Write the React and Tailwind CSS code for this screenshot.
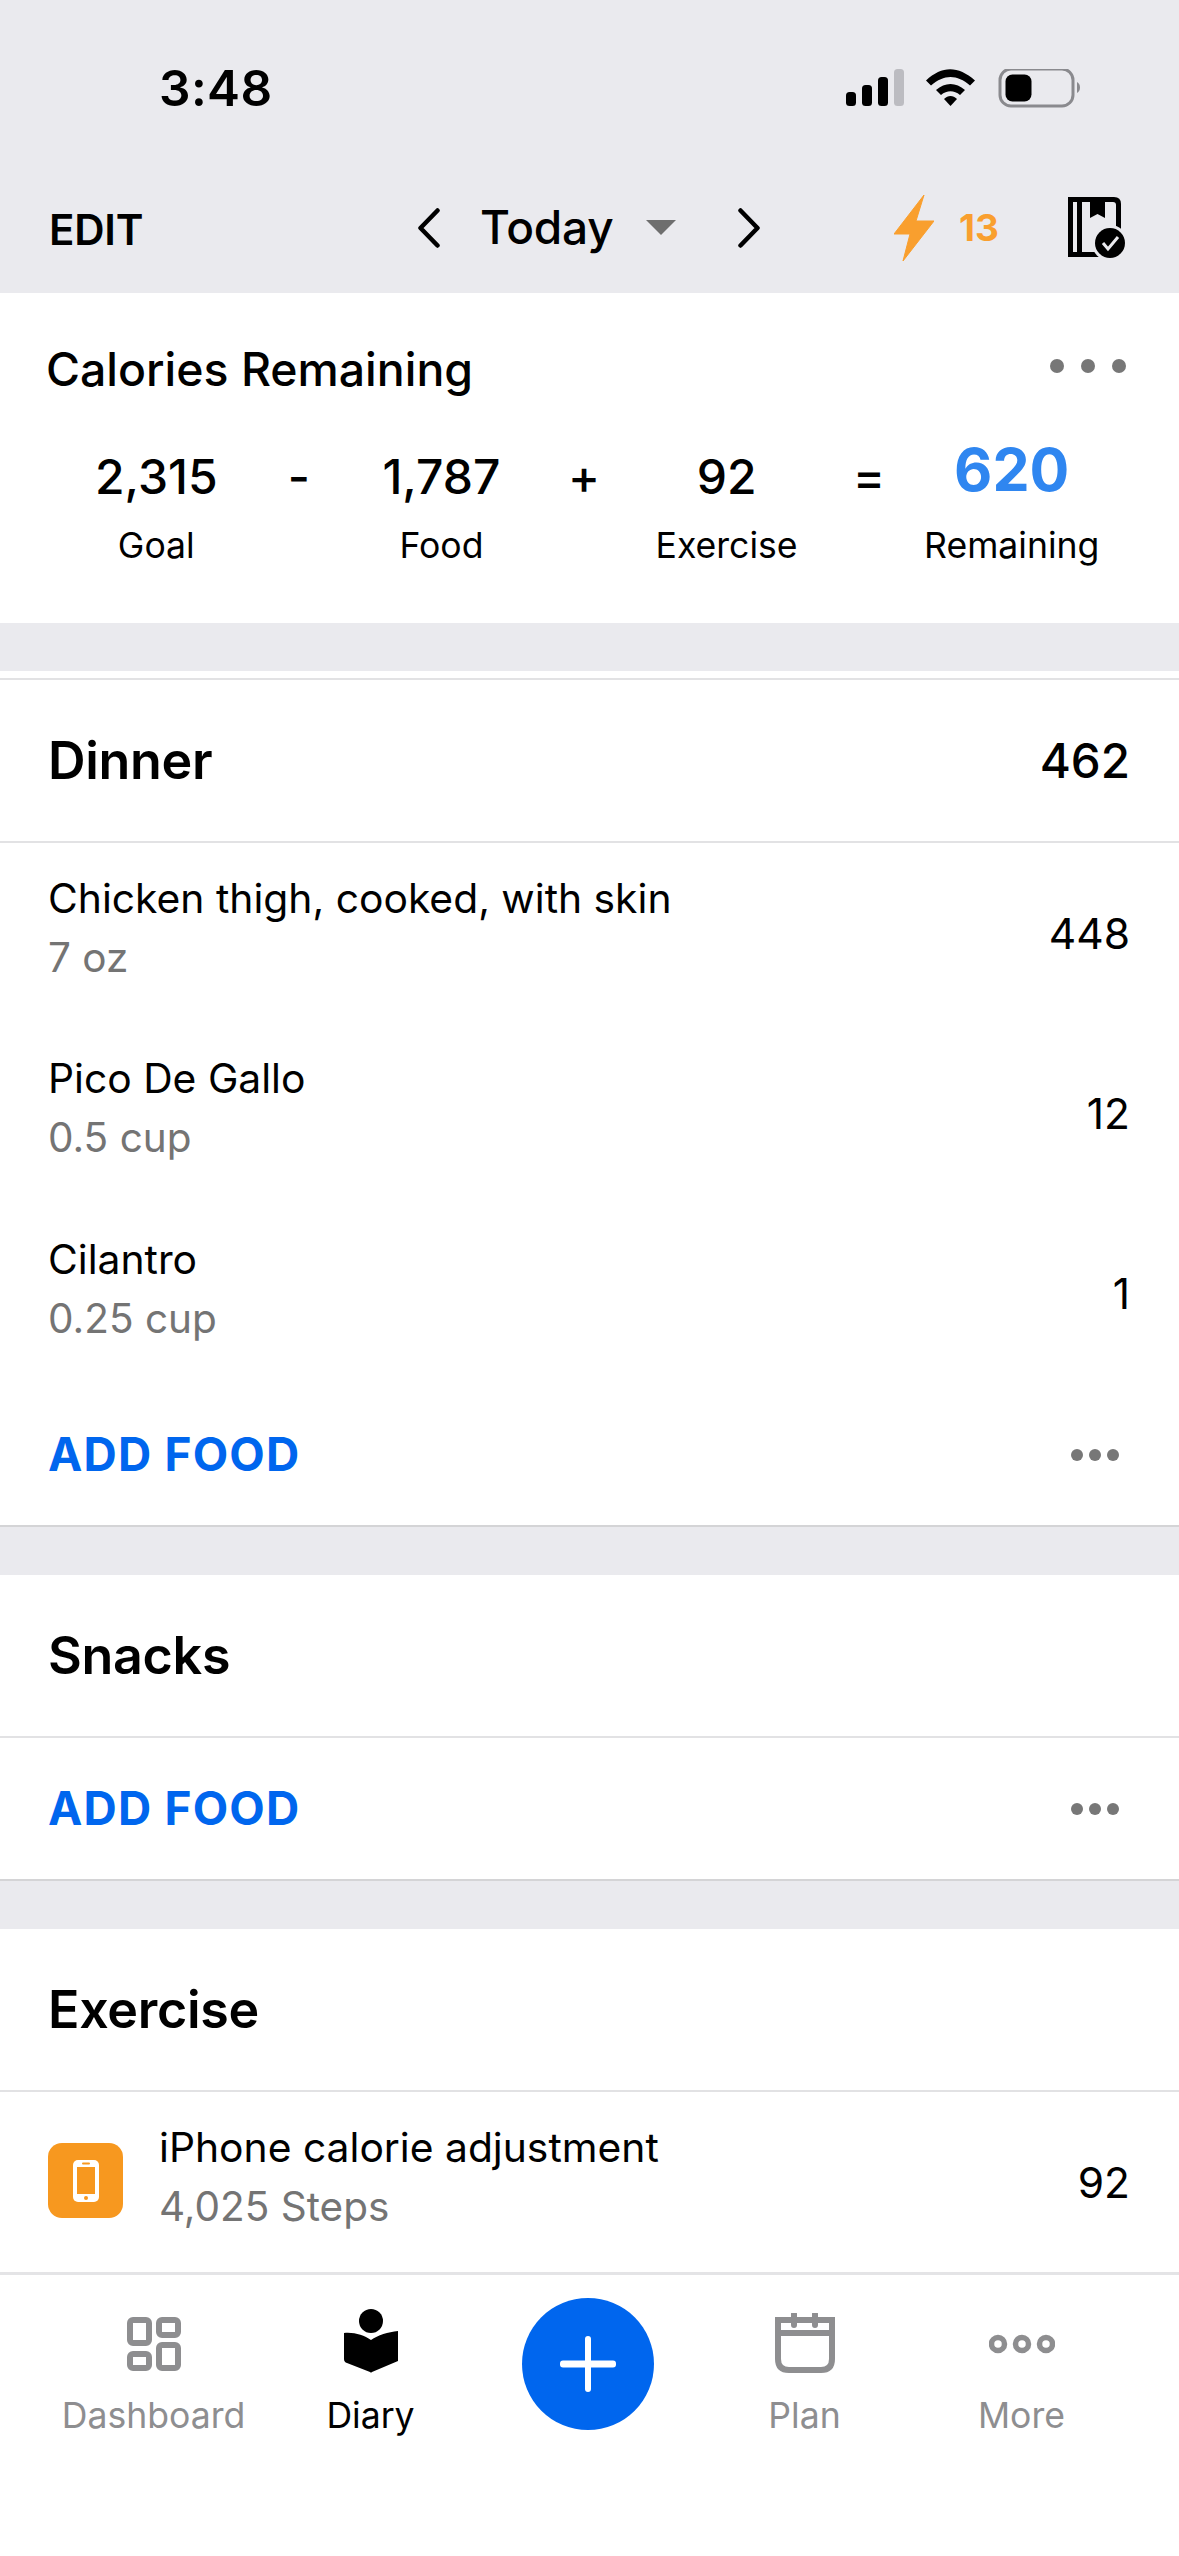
import React from "react";

const Dots = ({ r = 7, gap = 20, color = "#777" }) => (
  <div className="flex items-center" style={{ gap }}>
    {[0, 1, 2].map((i) => (
      <div key={i} className="rounded-full" style={{ width: r * 2, height: r * 2, background: color }} />
    ))}
  </div>
);

const SectionHead = ({ title, value }) => (
  <div className="h-[163px] flex items-center justify-between pl-[48px] pr-[49px] pt-[1px] border-b-2 border-[#e2e2e4] bg-white shrink-0">
    <span className="text-[52px] font-semibold tracking-[-0.3px] text-black">{title}</span>
    {value && <span className="text-[47.5px] font-medium text-black">{value}</span>}
  </div>
);

const FoodRow = ({ title, sub, value, icon, h = 180 }) => (
  <div className="flex items-center justify-between pl-[48px] pr-[49px] bg-white shrink-0" style={{ height: h }}>
    <div className="flex items-center">
      {icon}
      <div className="flex flex-col pb-[10px]">
        <span className="text-[40.8px] leading-[60px] text-black">{title}</span>
        <span className="text-[40.5px] leading-[60px] text-[#747474]">{sub}</span>
      </div>
    </div>
    <span className="text-[42.5px] pt-[1px] text-black">{value}</span>
  </div>
);

const AddFood = () => (
  <div className="h-[143px] flex items-center justify-between pl-[48px] pr-[60px] bg-white border-b-2 border-[#d4d4d6] shrink-0">
    <span className="text-[46px] font-bold tracking-[1.2px] text-[#0066ee]">ADD FOOD</span>
    <Dots r={6} gap={6} />
  </div>
);

const Gap = () => <div className="h-[48px] bg-[#eaeaee] shrink-0" />;

const NavItem = ({ icon, label, active }) => (
  <div className={`w-[217px] flex flex-col items-center ${active ? "text-black" : "text-[#8e8e90]"}`}>
    <div className="h-[75px] flex items-end justify-center">{icon}</div>
    <span className="text-[35.6px] leading-[50px] mt-[18px]">{label}</span>
  </div>
);

export default function App() {
  return (
    <div className="w-[1179px] h-[2556px] bg-white overflow-hidden flex flex-col" style={{ fontFamily: "Inter, 'Liberation Sans', sans-serif" }}>
      <div className="h-[293px] bg-[#eaeaee] flex flex-col shrink-0">
        <div className="h-[176px] flex items-start justify-between pt-[57px] pl-[159px] pr-[90px]">
          <span className="text-[49.5px] leading-[62px] font-semibold text-black tracking-[0.4px]">3:48</span>
          <div className="flex items-start h-[62px] pt-[12px]">
            <svg width="243" height="42" viewBox="0 0 243 42">
              <rect x="0" y="23" width="10" height="14" rx="3.5" fill="#000" />
              <rect x="16" y="16" width="10" height="21" rx="3.5" fill="#000" />
              <rect x="32" y="8" width="10" height="29" rx="3.5" fill="#000" />
              <rect x="48" y="0" width="10" height="37" rx="3.5" fill="#bcbcc1" />
              <path d="M80 11.5 C 96 -3.5 112 -3.5 129 11.5 L 124 16.5 C 111 5 98 5 85 16.5 Z" fill="#000" />
              <path d="M90 21 C 99 13 110 13 119 21 L 114 26 C 108 21 101 21 95 26 Z" fill="#000" />
              <path d="M98 30 C 102 26 107 26 111 30 L 104.5 37 Z" fill="#000" />
              <rect x="154" y="0" width="73" height="37" rx="11" fill="none" stroke="#8a8a8e" strokeWidth="3" />
              <rect x="159.5" y="5.5" width="26" height="27" rx="7" fill="#000" />
              <path d="M231 13 C 235 15 235 22 231 24 Z" fill="#8a8a8e" />
            </svg>
          </div>
        </div>
        <div className="h-[117px] flex items-center pb-[14px] pl-[49px]">
          <span className="w-[368px] text-[42px] font-semibold text-black tracking-[-0.2px] pt-[3px]">EDIT</span>
          <svg width="23" height="40" viewBox="0 0 23 40" className="mr-[40px]">
            <path d="M20.5 2.5 L3.5 20 L20.5 37.5" fill="none" stroke="#000" strokeWidth="4.5" strokeLinecap="round" strokeLinejoin="round" />
          </svg>
          <span className="w-[166px] text-[46px] font-medium text-black -tracking-[0.2px]">Today</span>
          <svg width="30" height="15" viewBox="0 0 30 15" className="mr-[62px]">
            <path d="M0 0 H30 L15 15 Z" fill="#6e6e6e" />
          </svg>
          <svg width="23" height="40" viewBox="0 0 23 40" className="mr-[133px]">
            <path d="M2.5 2.5 L19.5 20 L2.5 37.5" fill="none" stroke="#000" strokeWidth="4.5" strokeLinecap="round" strokeLinejoin="round" />
          </svg>
          <svg width="40" height="66" viewBox="0 0 40 66">
            <path d="M30 0 L0 39 L16 39 L9 66 L40 26 L22 26 Z" fill="#f99f2e" strokeLinejoin="round" stroke="#f99f2e" strokeWidth="1" />
          </svg>
          <span className="ml-[25px] text-[37px] font-bold text-[#f99f2e]">13</span>
          <svg width="58" height="62" viewBox="0 0 58 62" className="ml-[69px]">
            <path d="M0 0 H46 Q53 0 53 7 V60 H0 Z" fill="#000" />
            <rect x="5" y="5" width="4" height="50" fill="#eaeaee" />
            <path d="M14 5 H45 Q48 5 48 8 V55 H14 Z" fill="#eaeaee" />
            <path d="M22 5 H37 V21 L29.5 17 L22 21 Z" fill="#000" />
            <circle cx="42" cy="46" r="18" fill="#eaeaee" />
            <circle cx="42" cy="46" r="15" fill="#000" />
            <path d="M35 46 L40 52 L50 40" fill="none" stroke="#eaeaee" strokeWidth="3" />
          </svg>
        </div>
      </div>

      <div className="h-[330px] bg-white shrink-0 flex flex-col">
        <div className="h-[154px] flex items-center justify-between pl-[46px] pr-[53px]">
          <span className="text-[46.4px] font-medium text-black">Calories Remaining</span>
          <div className="-mt-[8px]"><Dots r={7} gap={17} /></div>
        </div>
        <div className="grid grid-cols-7 pl-[85px] pr-[96px]">
          {[
            ["2,315", "Goal"],
            ["-"],
            ["1,787", "Food"],
            ["+"],
            ["92", "Exercise"],
            ["="],
            ["620", "Remaining", true],
          ].map(([n, l, blue], i) => (
            <div key={i} className="flex flex-col items-center whitespace-nowrap">
              <div className="h-[60px] flex items-center justify-center">
                <span className={blue ? "text-[59px] font-bold text-[#2f86f0] -mt-[14px]" : "text-[48px] font-medium text-black"}>{n}</span>
              </div>
              <span className="text-[35.6px] leading-[50px] mt-[14px] text-black">{l || "\u00a0"}</span>
            </div>
          ))}
        </div>
      </div>

      <Gap />
      <div className="h-[9px] bg-white border-b-2 border-[#e2e2e4] shrink-0" />
      <SectionHead title="Dinner" value="462" />
      <FoodRow title="Chicken thigh, cooked, with skin" sub="7 oz" value="448" />
      <FoodRow title="Pico De Gallo" sub="0.5 cup" value="12" />
      <FoodRow title="Cilantro" sub="0.25 cup" value="1" h={181} />
      <AddFood />
      <Gap />
      <SectionHead title="Snacks" />
      <AddFood />
      <Gap />
      <SectionHead title="Exercise" />
      <FoodRow
        title="iPhone calorie adjustment"
        sub="4,025 Steps"
        value="92"
        icon={
          <div className="w-[75px] h-[75px] rounded-[14px] bg-[#f7981f] flex items-center justify-center mr-[36px] -mt-[3px]">
            <svg width="26" height="42" viewBox="0 0 26 42">
              <rect x="0" y="0" width="26" height="42" rx="5" fill="#fff" />
              <rect x="4" y="7" width="18" height="27" fill="#f7981f" />
              <rect x="9" y="2.5" width="8" height="2" rx="1" fill="#f7981f" />
              <circle cx="13" cy="38" r="2" fill="#f7981f" />
            </svg>
          </div>
        }
      />

      <div className="flex-1 bg-white border-t-[3px] border-[#e4e4e6] pl-[45px] flex items-start pt-[23px]">
        <NavItem
          label="Dashboard"
          icon={
            <svg width="54" height="54" viewBox="0 0 54 54" fill="none" stroke="#8e8e90" strokeWidth="6" className="mb-[2px]">
              <rect x="3" y="3" width="19" height="23" rx="3" />
              <rect x="32" y="3" width="19" height="15" rx="3" />
              <rect x="3" y="37" width="19" height="14" rx="3" />
              <rect x="32" y="28" width="19" height="23" rx="3" />
            </svg>
          }
        />
        <NavItem
          label="Diary"
          active
          icon={
            <svg width="54" height="64" viewBox="0 0 54 64">
              <circle cx="27" cy="12" r="12" fill="#000" />
              <path d="M0 24 C 10 23 20 26 27 31 C 34 26 44 23 54 22 V52 L 28 63 Q 27 64 26 63 L 3 54 Q 0 53 0 50 Z" fill="#000" />
            </svg>
          }
        />
        <div className="w-[217px] flex justify-center">
          <div className="w-[132px] h-[132px] rounded-full bg-[#0066ee] flex items-center justify-center">
            <svg width="56" height="56" viewBox="0 0 56 56">
              <rect x="25" y="0" width="6" height="56" rx="3" fill="#fff" />
              <rect x="0" y="24.5" width="56" height="7" rx="3" fill="#fff" />
            </svg>
          </div>
        </div>
        <NavItem
          label="Plan"
          icon={
            <svg width="60" height="60" viewBox="0 0 60 60" fill="none" stroke="#8e8e90" strokeWidth="6">
              <path d="M3 7 H57 V46 Q57 57 46 57 H14 Q3 57 3 46 Z" />
              <path d="M3 20 H57" />
              <path d="M19 1 V12 M40 1 V12" strokeLinecap="round" />
            </svg>
          }
        />
        <NavItem
          label="More"
          icon={
            <svg width="66" height="44" viewBox="0 0 66 44" fill="none" stroke="#8e8e90" strokeWidth="5.5" className="mb-[7px]">
              <circle cx="9" cy="22" r="6.5" />
              <circle cx="33" cy="22" r="6.5" />
              <circle cx="57" cy="22" r="6.5" />
            </svg>
          }
        />
      </div>
    </div>
  );
}
